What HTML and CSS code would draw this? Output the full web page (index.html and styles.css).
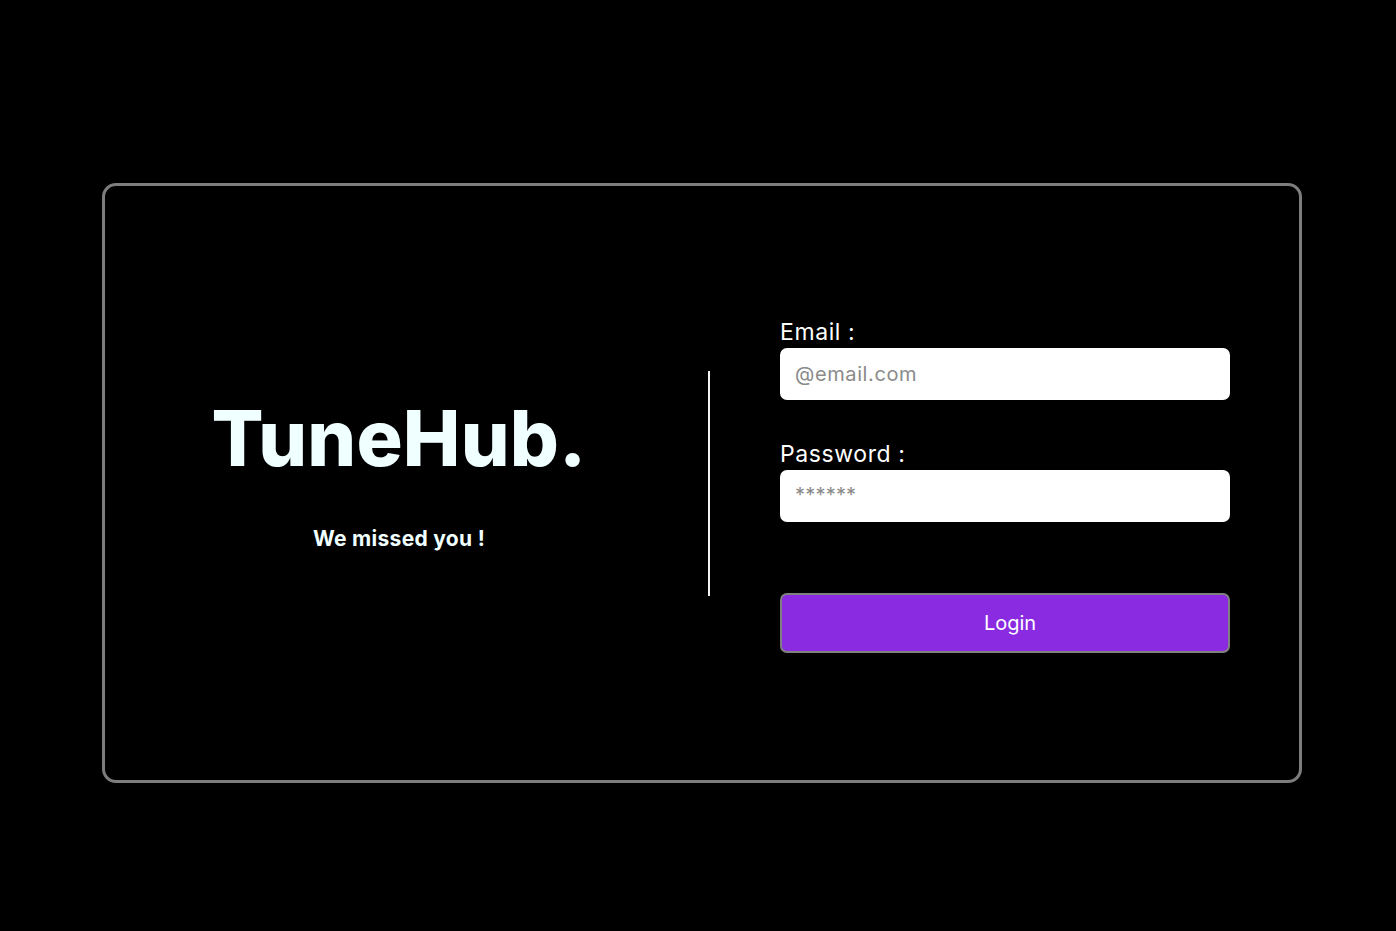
FILE: index.html
```html
<!DOCTYPE html>
<html lang="en">
<head>
<meta charset="utf-8">
<title>TuneHub Login</title>
<link rel="stylesheet" href="styles.css">
</head>
<body>
  <main class="card">
    <section class="brand">
      <h1 class="brand-title">TuneHub.</h1>
      <p class="brand-sub">We missed you !</p>
    </section>
    <div class="divider"></div>
    <form class="login-form">
      <label class="field-label" for="email">Email :</label>
      <input class="field-input" id="email" type="email" placeholder="@email.com">
      <label class="field-label field-label-second" for="password">Password :</label>
      <input class="field-input field-input-pass" id="password" type="password" placeholder="******">
      <button class="login-btn" type="button">Login</button>
    </form>
  </main>
</body>
</html>
```
FILE: styles.css
```css
html, body {
  margin: 0;
  padding: 0;
  background: #000;
}
body {
  font-family: Inter, "DejaVu Sans", sans-serif;
  color: #fff;
  padding: 183px 0 0 102px;
}
.card {
  box-sizing: border-box;
  width: 1200px;
  height: 600px;
  border: 3px solid #7d7d7d;
  border-radius: 14px;
  display: flex;
  align-items: center;
}
.brand {
  width: 588px;
  display: flex;
  flex-direction: column;
  align-items: center;
  padding-bottom: 16px;
}
.brand-title {
  margin: 0;
  font-size: 77px;
  font-weight: 800;
  color: #f0ffff;
  letter-spacing: 0.2px;
  line-height: 1;
}
.brand-sub {
  margin: 49px 0 0;
  font-size: 21px;
  font-weight: 700;
  color: #f0ffff;
  letter-spacing: 0.3px;
}
.divider {
  width: 2px;
  height: 225px;
  background: #f2f2f2;
  margin-left: 15px;
}
.login-form {
  width: 450px;
  margin-left: 70px;
  display: flex;
  flex-direction: column;
  padding-top: 4px;
}
.field-label {
  display: block;
  font-size: 23px;
  line-height: 28px;
  height: 30px;
  letter-spacing: 0.6px;
  color: #fff;
}
.field-label-second {
  margin-top: 40px;
}
.field-input {
  box-sizing: border-box;
  width: 450px;
  height: 52px;
  border: none;
  border-radius: 7px;
  background: #fff;
  padding: 0 15px;
  font-family: Inter, "DejaVu Sans", sans-serif;
  font-size: 20px;
  letter-spacing: 0.6px;
  color: #333;
  outline: none;
}
.field-input::placeholder {
  color: #8a8a8a;
}
.field-input-pass {
  padding-bottom: 2px;
  letter-spacing: 0.2px;
}
.login-btn {
  box-sizing: border-box;
  margin-top: 71px;
  width: 450px;
  height: 60px;
  border: 2px solid #808080;
  border-radius: 7px;
  background: #8a2be2;
  color: #fff;
  font-family: Inter, "DejaVu Sans", sans-serif;
  font-size: 20px;
  padding-left: 16px;
  cursor: pointer;
}
```
